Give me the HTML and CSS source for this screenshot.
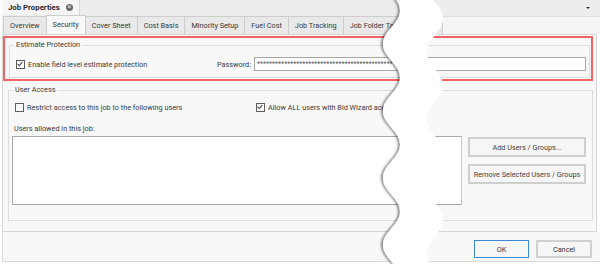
FILE: index.html
```html
<!DOCTYPE html>
<html lang="en">
<head>
    <meta charset="UTF-8">
    <title>Job Properties</title>
    <link rel="stylesheet" href="styles.css">
</head>
<body>
    <div class="window">
        <div class="titlebar">
            <div class="doc-tab">
                <span class="doc-title">Job Properties</span>
                <span class="doc-close">&#215;</span>
            </div>
            <span class="doc-menu"></span>
        </div>

        <div class="tabs">
            <div class="tab">Overview</div>
            <div class="tab active">Security</div>
            <div class="tab">Cover Sheet</div>
            <div class="tab">Cost Basis</div>
            <div class="tab">Minority Setup</div>
            <div class="tab">Fuel Cost</div>
            <div class="tab">Job Tracking</div>
            <div class="tab tab-last">Job Folder Tags</div>
            <div class="tab-fill"></div>
        </div>

        <div class="panel">
            <div class="highlight">
                <fieldset class="group group-estimate">
                    <legend>Estimate Protection</legend>
                    <div class="row">
                        <label class="check"><span class="box checked"></span>Enable field level estimate protection</label>
                        <label class="pwd-label">Password:</label>
                        <div class="pwd-input">*********************************************</div>
                    </div>
                </fieldset>
            </div>

            <fieldset class="group group-users">
                <legend>User Access</legend>
                <div class="row">
                    <label class="check restrict"><span class="box"></span>Restrict access to this job to the following users</label>
                    <label class="check"><span class="box checked"></span>Allow ALL users with Bid Wizard access</label>
                </div>
                <div class="allowed-label">Users allowed in this job:</div>
                <div class="list-row">
                    <div class="user-list"></div>
                    <div class="list-buttons">
                        <button class="side-btn">Add Users / Groups...</button>
                        <button class="side-btn">Remove Selected Users / Groups</button>
                    </div>
                </div>
            </fieldset>
        </div>

        <div class="footer">
            <button class="btn btn-ok">OK</button>
            <button class="btn">Cancel</button>
        </div>

        <!-- torn paper cut over the dialog -->
        <svg class="tear" width="600" height="264" viewBox="0 0 600 264">
            <defs>
                <filter id="tear-shadow" x="-20%" y="-5%" width="140%" height="110%">
                    <feDropShadow dx="-2" dy="0" stdDeviation="1.2" flood-color="#000" flood-opacity="0.45"/>
                </filter>
            </defs>
            <path fill="#fff" filter="url(#tear-shadow)" d="M383,-23 C383,-9.6 400,-2.9 400,10.5 C400,23.9 383,30.6 383,44 C383,57.4 400,64.1 400,77.5 C400,90.9 383,97.6 383,111 C383,124.4 400,131.1 400,144.5 C400,157.9 383,164.6 383,178 C383,191.4 400,198.1 400,211.5 C400,224.9 383,231.6 383,245 C383,258.4 400,265.1 400,278.5 L443,286.5 C443,273.1 427,266.4 427,253 C427,239.6 443,232.9 443,219.5 C443,206.1 427,199.4 427,186 C427,172.6 443,165.9 443,152.5 C443,139.1 427,132.4 427,119 C427,105.6 443,98.9 443,85.5 C443,72.1 427,65.4 427,52 C427,38.6 443,31.9 443,18.5 C443,5.1 427,-1.6 427,-15 Z"/>
        </svg>
    </div>
</body>
</html>
```

FILE: styles.css
```css
body {
    margin: 0;
    padding: 0;
    background-color: #ffffff;
    font-family: Roboto, "Liberation Sans", sans-serif;
    font-size: 7.3px;
    color: #3a3a3a;
}

.window {
    position: relative;
    width: 600px;
    height: 264px;
    overflow: hidden;
    background-color: #ffffff;
}

/* document tab strip */
.titlebar {
    display: flex;
    align-items: center;
    height: 15px;
    margin-left: 2px;
    background-color: #ededed;
}

.doc-tab {
    display: flex;
    align-items: center;
    width: 78px;
    height: 15px;
    padding-left: 6px;
    box-sizing: border-box;
    background-color: #f6f6f6;
    border-right: 1px solid #dadada;
}

.doc-title {
    font-weight: bold;
    color: #2a2a2a;
    font-size: 7.8px;
}

.doc-close {
    display: flex;
    align-items: center;
    justify-content: center;
    width: 7px;
    height: 7px;
    margin-left: 6px;
    border-radius: 50%;
    background-color: #6a6a6a;
    color: #f0f0f0;
    font-size: 7px;
    line-height: 1;
}

.doc-menu {
    margin-left: auto;
    margin-right: 10px;
    width: 0;
    height: 0;
    border-left: 2px solid transparent;
    border-right: 2px solid transparent;
    border-top: 2px solid #333;
}

/* page tabs */
.tabs {
    display: flex;
    align-items: flex-end;
    height: 19px;
    margin-left: 2px;
    background-color: #ededed;
}

.tab {
    height: 18px;
    line-height: 18px;
    padding: 0 6px;
    margin-left: -1px;
    box-sizing: border-box;
    background-color: #e9e9e9;
    border: 1px solid #cdcdcd;
    border-bottom: none;
    color: #3a3a3a;
    white-space: nowrap;
}

.tab:first-child {
    margin-left: 1px;
}

.tab.active {
    position: relative;
    height: 19px;
    background-color: #f8f8f8;
    z-index: 1;
}

.tab-last {
    padding-right: 40px;
}

.tab-fill {
    flex: 1;
    height: 17px;
    background-color: #f4f4f4;
    border-top: 1px solid #e0e0e0;
}

/* main page */
.panel {
    height: 198px;
    margin-left: 2px;
    margin-right: 3px;
    padding: 1px 0 0 0;
    box-sizing: border-box;
    background-color: #f8f8f8;
    border: 1px solid #d6d6d6;
}

.highlight {
    margin-right: 3px;
    padding: 2px 1px 1px 4px;
    border: 2px solid #f36363;
}

.group {
    margin: 0;
    padding: 0 3px 0 3px;
    border: 1px solid #dedede;
    min-width: 0;
}

.group legend {
    padding: 0 2px;
    margin-left: 1px;
    color: #3a3a3a;
    line-height: 10px;
}

.row {
    display: flex;
    align-items: center;
    margin-left: 3px;
}

.group-estimate {
    padding-top: 7px;
    padding-bottom: 6px;
}

.group-estimate .row {
    height: 14px;
}

.check {
    display: flex;
    align-items: center;
    white-space: nowrap;
}

.box {
    position: relative;
    width: 9px;
    height: 9px;
    margin-right: 3px;
    box-sizing: border-box;
    border: 1px solid #5e5e5e;
    background-color: #ffffff;
}

.box.checked::after {
    content: "";
    position: absolute;
    left: 1px;
    top: 0px;
    width: 4px;
    height: 2px;
    border-left: 1px solid #444;
    border-bottom: 1px solid #444;
    transform: translate(0, 1px) rotate(-48deg);
    transform-origin: 2px 2px;
}

.pwd-label {
    margin-left: auto;
    margin-right: 3px;
}

.pwd-input {
    width: 332px;
    height: 14px;
    line-height: 13px;
    padding-left: 2px;
    box-sizing: border-box;
    overflow: hidden;
    white-space: nowrap;
    background-color: #ffffff;
    border: 1px solid #a8a8a8;
    color: #555;
    font-size: 7px;
}

.group-users {
    margin: 4px 3px 0 5px;
    padding: 7px 4px 15px 3px;
}

.group-users .row {
    height: 10px;
}

.restrict {
    width: 241px;
}

.allowed-label {
    margin: 12px 0 0 2px;
    height: 10px;
    line-height: 10px;
}

.list-row {
    display: flex;
    margin-top: 2px;
}

.user-list {
    width: 450px;
    height: 69px;
    box-sizing: border-box;
    background-color: #ffffff;
    border: 1px solid #a9a9a9;
    border-right-color: #c8c8c8;
}

.list-buttons {
    display: flex;
    flex-direction: column;
    gap: 7px;
    margin-left: 6px;
    margin-top: 1px;
}

.side-btn {
    width: 118px;
    height: 20px;
    padding: 0;
    font-family: inherit;
    font-size: 7.3px;
    color: #444;
    background-color: #f6f6f6;
    border: 2px solid #cfcfcf;
}

/* dialog buttons */
.footer {
    display: flex;
    justify-content: flex-end;
    gap: 7px;
    height: 30px;
    padding: 8px 8px 0 0;
    margin-left: 2px;
    box-sizing: border-box;
    background-color: #f8f8f8;
    border-bottom: 1px solid #dcdcdc;
    border-left: 1px solid #dcdcdc;
}

.btn {
    width: 56px;
    height: 18px;
    padding: 0;
    font-family: inherit;
    font-size: 7.3px;
    color: #333;
    background-color: #f7f7f7;
    border: 2px solid #d0d0d0;
}

.btn-ok {
    width: 55px;
    border: 1px solid #3b8ad9;
}

.tear {
    position: absolute;
    top: 0;
    left: 0;
    pointer-events: none;
}
```
